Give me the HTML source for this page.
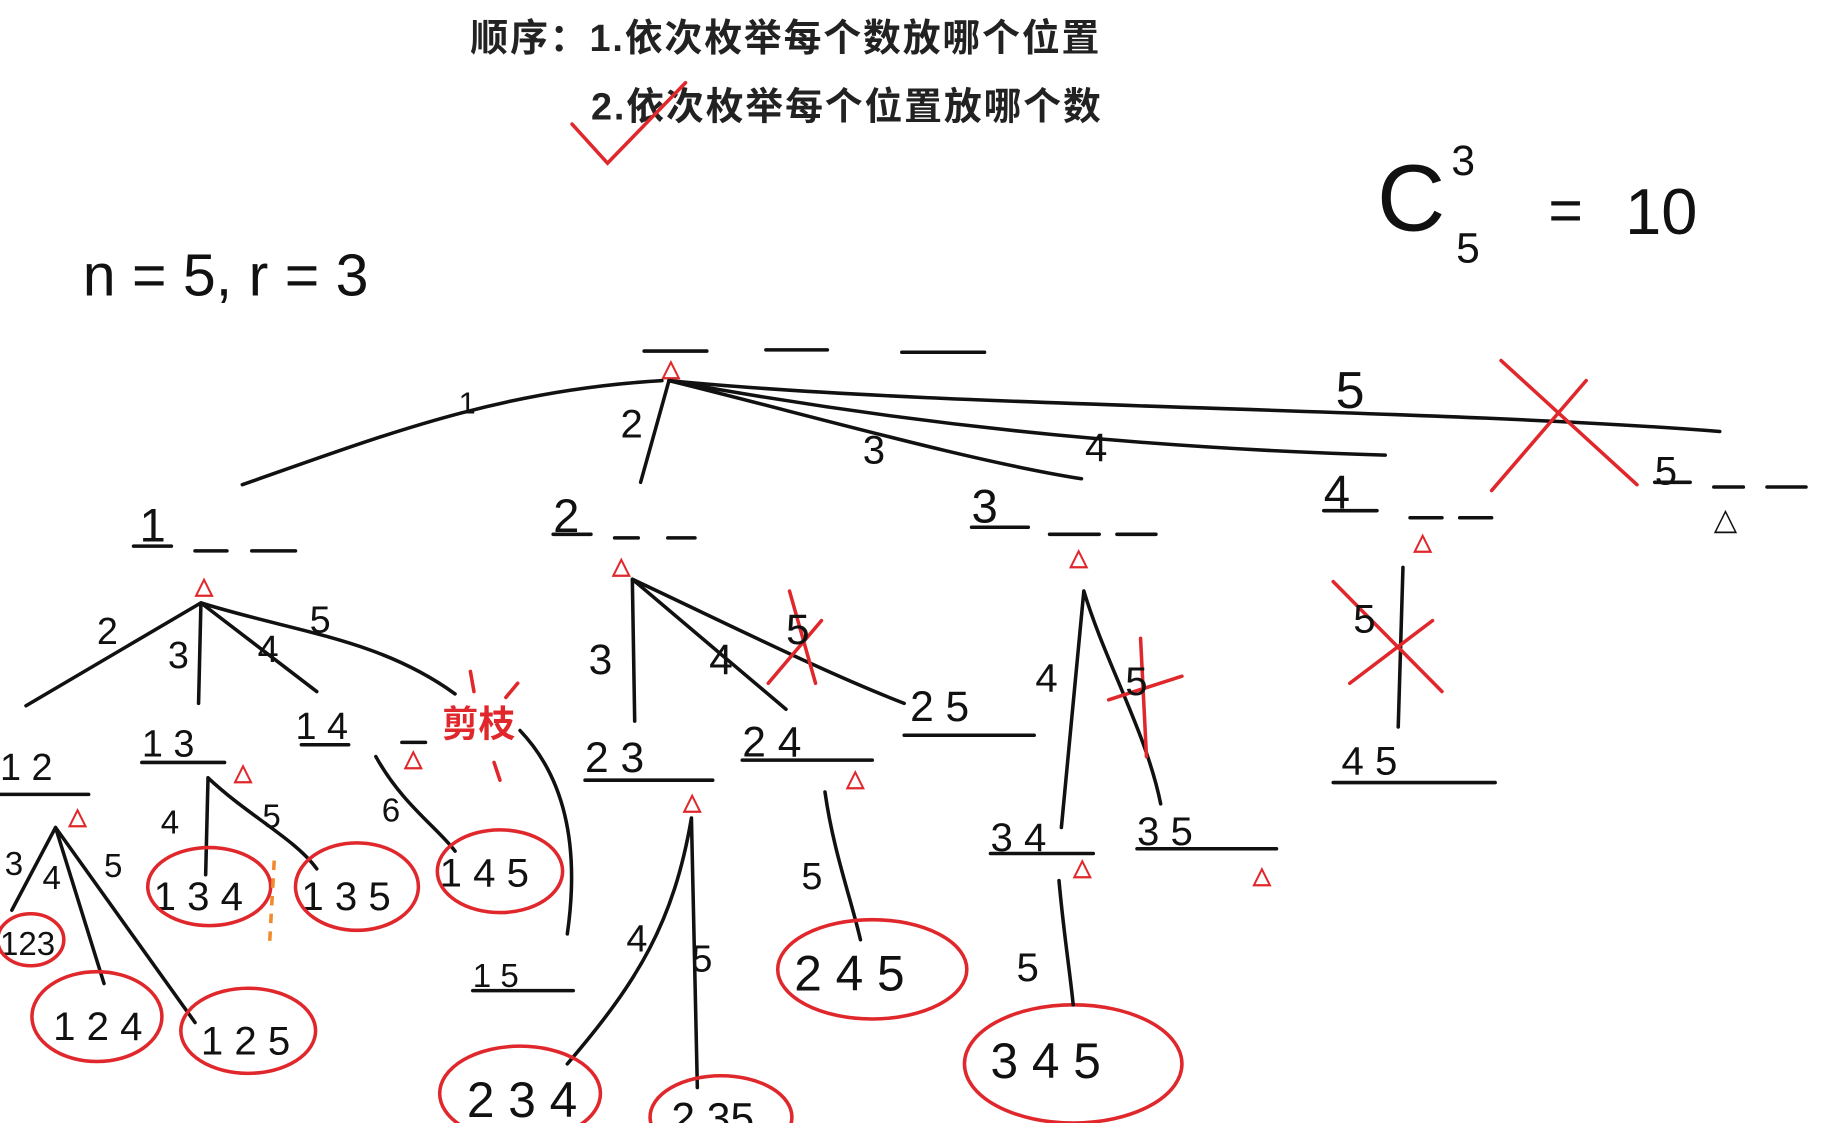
<!DOCTYPE html>
<html><head><meta charset="utf-8"><style>
html,body{margin:0;padding:0;background:#fff;width:1832px;height:1123px;overflow:hidden}
svg{display:block}
.t{font-family:"Liberation Sans","Noto Sans CJK SC",sans-serif;font-weight:bold;font-size:32px;fill:#222;letter-spacing:1.6px}
.h{font-family:"Liberation Sans",sans-serif;fill:#111}
.k{stroke:#111;stroke-width:3;fill:none;stroke-linecap:round}
.r{stroke:#e0282c;stroke-width:3;fill:none;stroke-linecap:round}
.tri{font-family:"Liberation Sans",sans-serif;fill:#e0282c;font-size:20px;font-weight:bold}
</style></head><body>
<svg width="1832" height="1123" viewBox="0 0 1550 950" preserveAspectRatio="none" xmlns="http://www.w3.org/2000/svg">
<text class="t" x="398" y="43">顺序：1.依次枚举每个数放哪个位置</text>
<text class="t" x="500" y="101">2.依次枚举每个位置放哪个数</text>
<path class="r" d="M484 105 L514 138 L580 70"/>
<g class="h" font-size="44">
<text x="1165" y="195" font-size="80">C</text>
<text x="1228" y="148" font-size="36">3</text>
<text x="1232" y="222" font-size="36">5</text>
<text x="1310" y="195" font-size="50">=</text>
<text x="1375" y="198" font-size="55">10</text>
<text x="70" y="250" font-size="50">n = 5, r = 3</text>
</g>
<path class="k" d="M545 297 H598 M648 296 H700 M763 298 H833"/>
<text class="tri" x="560" y="318">△</text>
<path class="k" d="M205 410 C320 370 420 330 560 322"/>
<path class="k" d="M566 322 L542 408"/>
<path class="k" d="M566 322 C680 350 820 390 915 405"/>
<path class="k" d="M566 322 C800 365 1000 380 1172 385"/>
<path class="k" d="M566 322 C800 345 1200 345 1455 365"/>
<g class="h" font-size="34">
<text x="388" y="350" font-size="26">1</text>
<text x="525" y="370">2</text>
<text x="730" y="392">3</text>
<text x="918" y="390">4</text>
<text x="1130" y="345" font-size="44">5</text>
<text x="1400" y="410">5</text>
</g>
<path class="r" d="M1270 305 L1385 410 M1342 322 L1262 415"/>
<g class="h" font-size="40">
<text x="118" y="458">1</text><path class="k" d="M113 462 H145 M165 466 H192 M213 466 H250"/>
<text x="468" y="450">2</text><path class="k" d="M468 452 H500 M520 455 H540 M565 455 H588"/>
<text x="822" y="442">3</text><path class="k" d="M822 446 H870 M888 452 H930 M945 452 H978"/>
<text x="1120" y="430">4</text><path class="k" d="M1120 432 H1165 M1193 438 H1220 M1235 438 H1262"/>
<path class="k" d="M1400 408 H1430 M1450 412 H1475 M1495 412 H1528"/>
</g>
<text class="tri" x="165" y="502">△</text>
<text class="tri" x="518" y="485">△</text>
<text class="tri" x="905" y="478">△</text>
<text class="tri" x="1196" y="465">△</text>
<text class="h" x="1450" y="448" font-size="26">△</text>
<path class="k" d="M170 510 L22 597 M170 510 L168 595 M170 510 L268 585 M170 510 C250 535 320 540 385 587"/>
<g class="h" font-size="32">
<text x="82" y="545">2</text><text x="142" y="565">3</text><text x="218" y="560">4</text><text x="262" y="535">5</text>
<text x="0" y="660">1 2</text><path class="k" d="M0 672 H75"/>
<text x="120" y="640">1 3</text><path class="k" d="M120 645 H190"/>
<text x="250" y="625">1 4</text><path class="k" d="M255 630 H295 M340 628 H360"/>
</g>
<text style="font-family:'Liberation Sans','Noto Sans CJK SC',sans-serif;font-weight:bold" fill="#e0282c" font-size="31" x="374" y="623">剪枝</text>
<path class="r" d="M398 568 L401 585 M438 578 L428 590 M418 645 L423 660"/>
<text class="tri" x="58" y="697">△</text>
<text class="tri" x="198" y="660">△</text>
<text class="tri" x="342" y="648">△</text>
<path class="k" d="M47 700 L10 770 M47 700 L88 832 M47 700 L165 865 M176 658 L174 740 M176 658 C210 690 250 710 268 735 M318 640 C340 680 370 700 385 720 M440 618 C480 660 490 720 480 790"/>
<g class="h" font-size="28">
<text x="4" y="740">3</text><text x="36" y="752">4</text><text x="88" y="742">5</text>
<text x="136" y="705">4</text><text x="222" y="700">5</text><text x="323" y="695">6</text>
<text x="400" y="835">1 5</text><path class="k" d="M400 838 H485"/>
</g>
<g class="h" font-size="34">
<text x="0" y="808" font-size="28">123</text>
<text x="130" y="770">1 3 4</text>
<text x="255" y="770">1 3 5</text>
<text x="372" y="750">1 4 5</text>
<text x="45" y="880">1 2 4</text>
<text x="170" y="892">1 2 5</text>
</g>
<ellipse class="r" cx="26" cy="795" rx="28" ry="22"/>
<ellipse class="r" cx="177" cy="750" rx="52" ry="33"/>
<ellipse class="r" cx="302" cy="750" rx="52" ry="37"/>
<ellipse class="r" cx="423" cy="737" rx="53" ry="35"/>
<ellipse class="r" cx="82" cy="860" rx="55" ry="38"/>
<ellipse class="r" cx="210" cy="872" rx="57" ry="36"/>
<path d="M232 728 L228 800" stroke="#f08a2c" stroke-width="3" stroke-dasharray="8 7"/>
<path class="k" d="M535 490 L537 610 M535 490 L665 600 M535 490 C620 530 700 570 765 595"/>
<path class="r" d="M668 500 L690 578 M695 525 L650 578"/>
<g class="h" font-size="36">
<text x="498" y="570">3</text><text x="600" y="570">4</text><text x="665" y="545">5</text>
<text x="770" y="610">2 5</text><path class="k" d="M765 622 H875"/>
<text x="495" y="653">2 3</text><path class="k" d="M495 660 H603"/>
<text x="628" y="640">2 4</text><path class="k" d="M628 643 H738"/>
</g>
<text class="tri" x="578" y="685">△</text>
<text class="tri" x="716" y="665">△</text>
<path class="k" d="M585 692 C570 780 540 830 480 900 M585 692 L590 920 M698 670 C705 720 720 760 728 795"/>
<g class="h" font-size="32">
<text x="530" y="805">4</text><text x="585" y="822">5</text><text x="678" y="752">5</text>
</g>
<g class="h" font-size="42">
<text x="395" y="945">2 3 4</text>
<text x="568" y="958" font-size="36">2 35</text>
<text x="672" y="838">2 4 5</text>
<text x="838" y="912">3 4 5</text>
</g>
<ellipse class="r" cx="440" cy="925" rx="68" ry="40"/>
<ellipse class="r" cx="610" cy="945" rx="60" ry="35"/>
<ellipse class="r" cx="738" cy="820" rx="80" ry="42"/>
<ellipse class="r" cx="908" cy="900" rx="92" ry="50"/>
<path class="k" d="M917 500 L898 700 M917 500 C935 560 970 620 982 680"/>
<path class="r" d="M965 540 L970 640 M938 592 L1000 572"/>
<g class="h" font-size="34">
<text x="876" y="585">4</text><text x="952" y="588">5</text>
<text x="838" y="720">3 4</text><path class="k" d="M838 722 H925"/>
<text x="962" y="715">3 5</text><path class="k" d="M962 718 H1080"/>
<text x="860" y="830">5</text>
</g>
<text class="tri" x="908" y="740">△</text>
<text class="tri" x="1060" y="747">△</text>
<path class="k" d="M896 745 C900 790 905 820 908 850"/>
<path class="k" d="M1187 480 L1183 615"/>
<path class="r" d="M1128 492 L1220 585 M1212 525 L1142 578"/>
<g class="h" font-size="34">
<text x="1145" y="535">5</text>
<text x="1135" y="655">4 5</text><path class="k" d="M1128 662 H1265"/>
</g>
</svg>
</body></html>
